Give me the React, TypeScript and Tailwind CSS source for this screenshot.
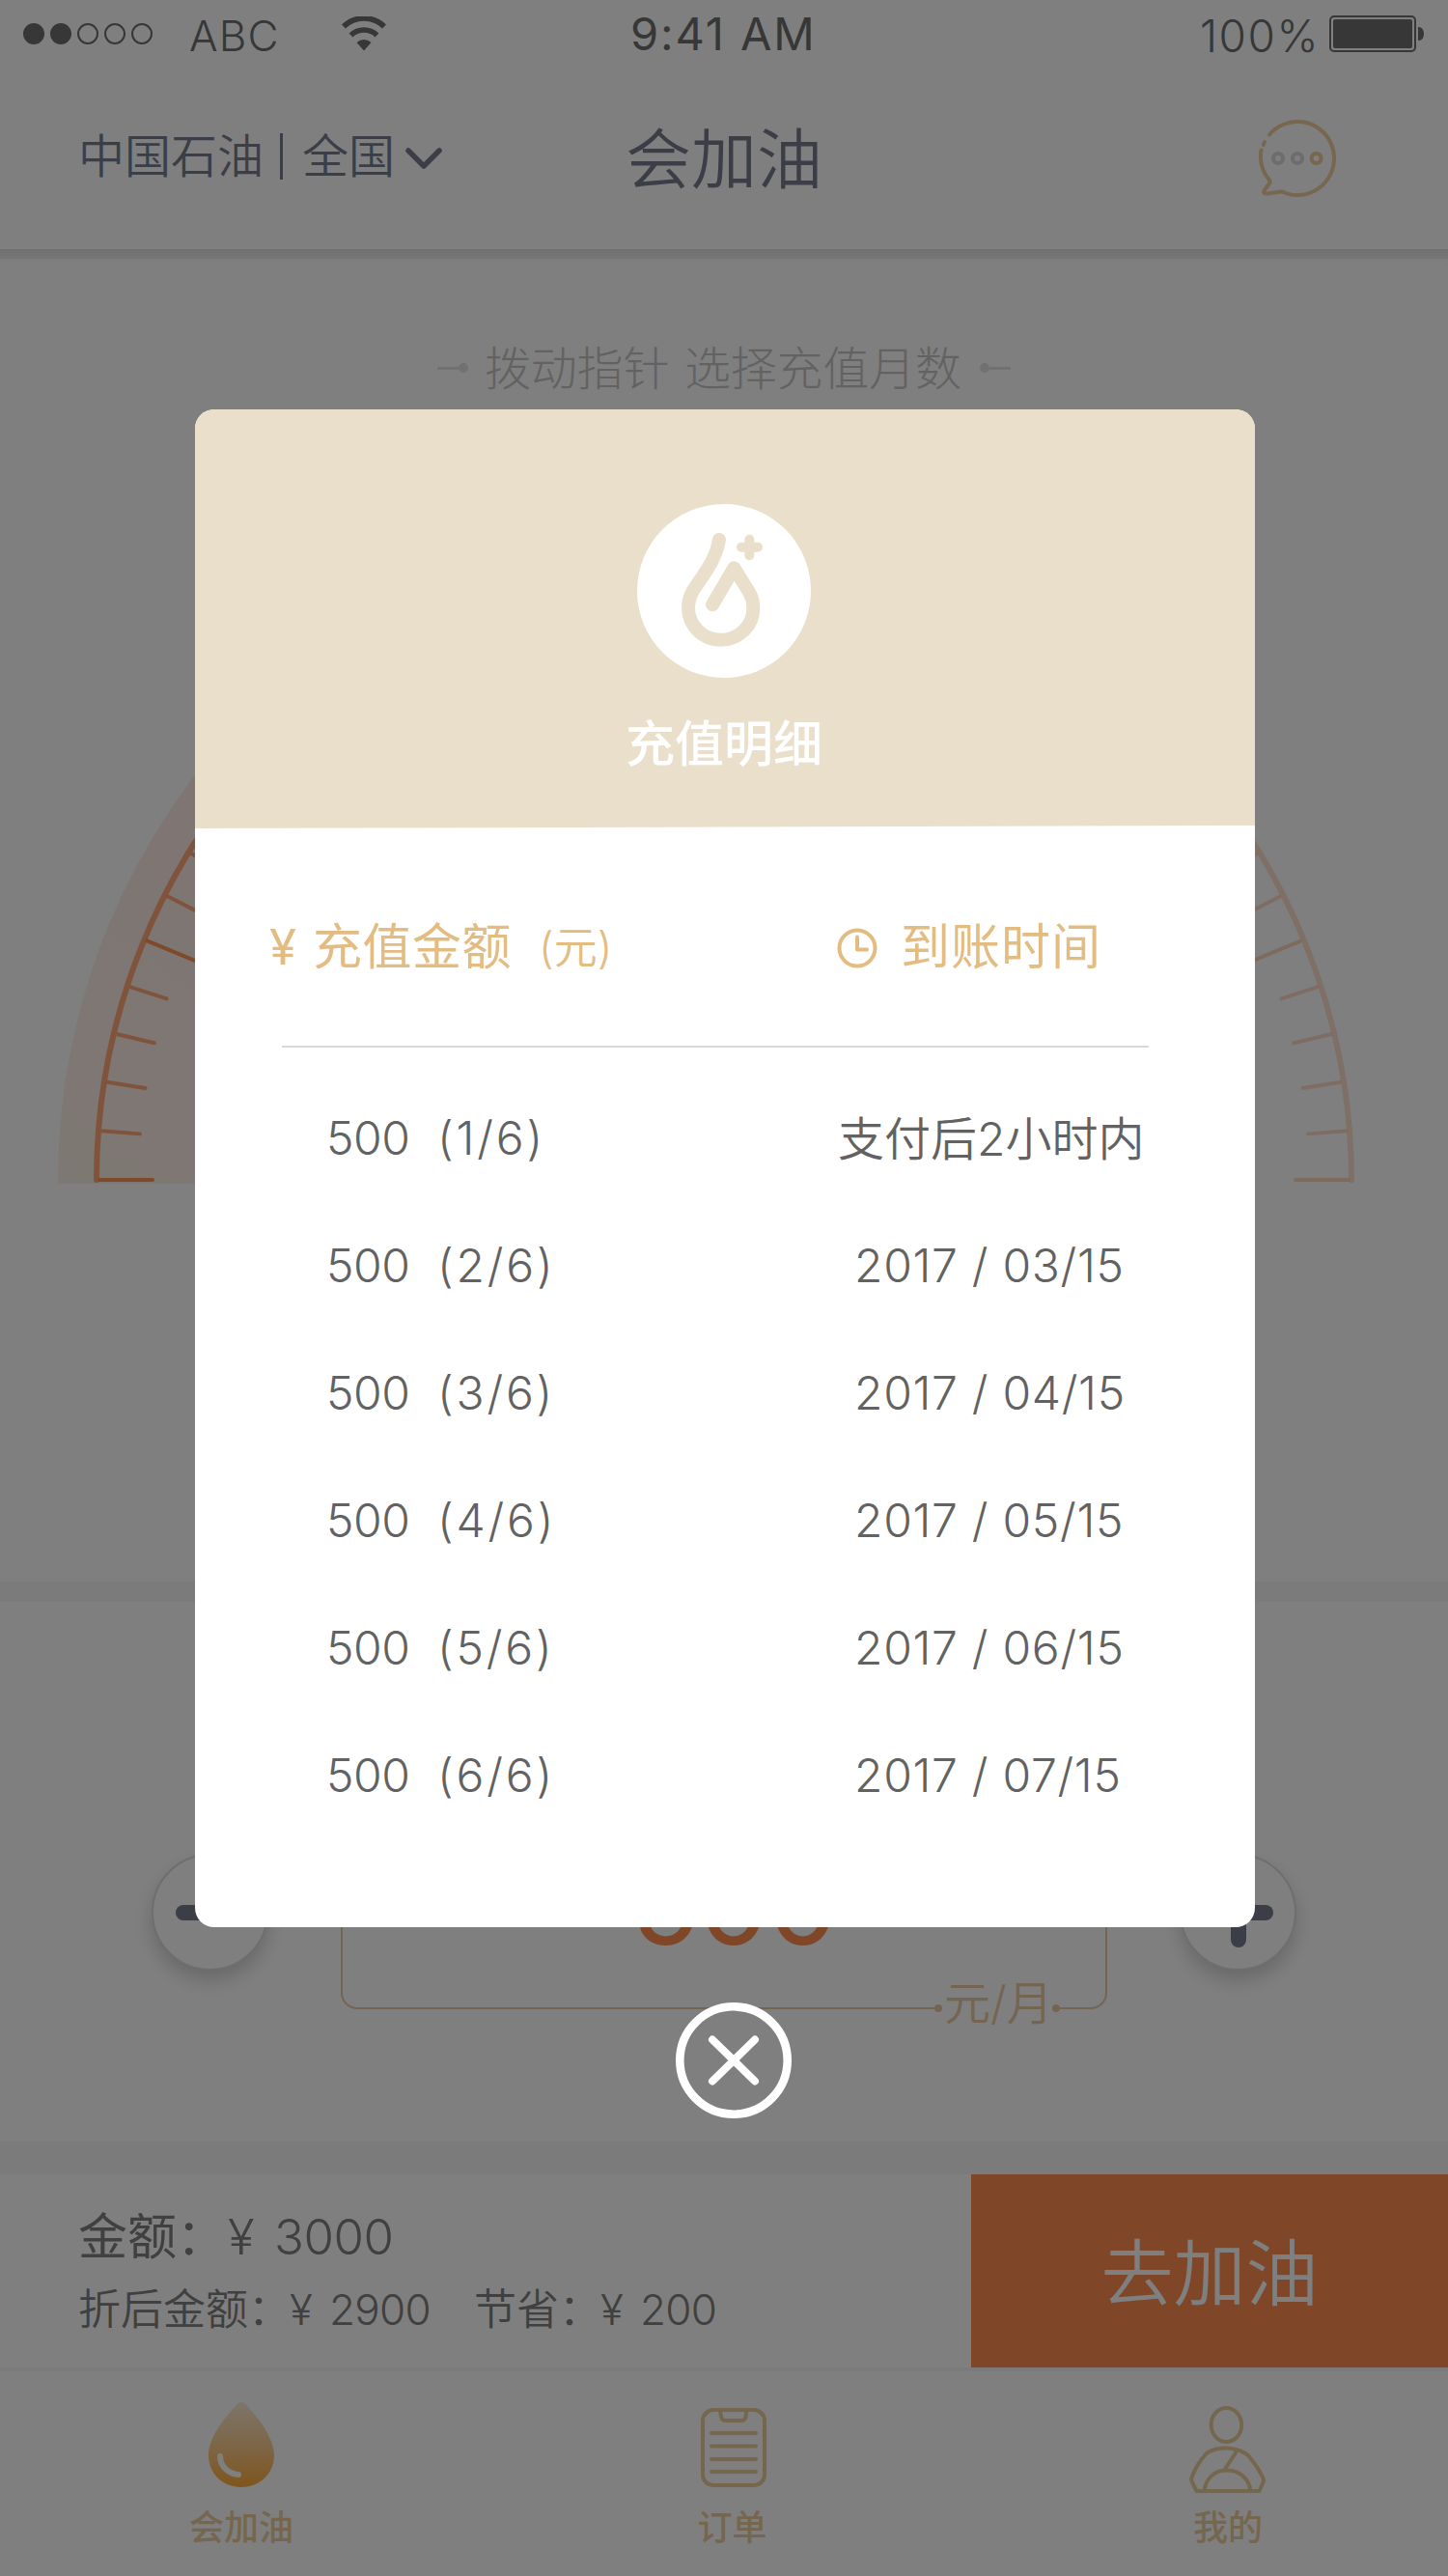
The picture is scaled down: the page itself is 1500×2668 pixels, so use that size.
import React from "react";

const FONT = "font-['Inter','Noto_Sans_CJK_SC',sans-serif]";

const schedule = [
  { part: "1/6", time: "支付后2小时内" },
  { part: "2/6", time: "2017 / 03/15" },
  { part: "3/6", time: "2017 / 04/15" },
  { part: "4/6", time: "2017 / 05/15" },
  { part: "5/6", time: "2017 / 06/15" },
  { part: "6/6", time: "2017 / 07/15" },
];

function StatusBar() {
  return (
    <div className="flex h-[70px] items-center text-[#6e6e6e]">
      <div className="ml-6 flex w-[172px] gap-[6px]">
        {[1, 1, 0, 0, 0].map((on, i) => (
          <span
            key={i}
            className={`h-[22px] w-[22px] rounded-full border-2 border-[#6e6e6e] ${on ? "bg-[#6e6e6e]" : ""}`}
          />
        ))}
      </div>
      <span className="mt-[3px] w-[158px] text-[44px] leading-[50px] font-[330] tracking-[1.2px]">ABC</span>
      <svg className="h-[36px] w-[46px]" viewBox="0 0 46 36" fill="none" stroke="currentColor">
        <path d="M2 10.5 A30 30 0 0 1 44 10.5" strokeWidth="5.6" />
        <path d="M9.5 19.5 A19.5 19.5 0 0 1 36.500 19.5" strokeWidth="5.6" />
        <path d="M23 35.500 L15.500 27 A11 11 0 0 1 30.500 27 Z" fill="currentColor" stroke="none" />
      </svg>
      <span className="ml-[253px] w-[199px] text-[47px] leading-[50px] tracking-[1.900px] whitespace-nowrap">9:41 AM</span>
      <span className="mt-[3px] ml-[391px] w-[134px] text-[46px] leading-[50px] font-light tracking-[1.5px] whitespace-nowrap">100%</span>
      <svg className="h-[38px] w-[98px]" viewBox="0 0 98 38" fill="currentColor">
        <rect x="1" y="1" width="88" height="36" rx="4" fill="none" stroke="currentColor" strokeWidth="2" />
        <rect x="4" y="4" width="82" height="30" rx="2" />
        <path d="M92 12 h1 q5 1 5 7 t-5 7 h-1z" />
      </svg>
    </div>
  );
}

function ChatIcon() {
  return (
    <svg className="h-[84px] w-[84px]" viewBox="1302 122 84 84" fill="none" stroke="#ecce9c" strokeWidth="4" strokeLinecap="round" strokeLinejoin="round">
      <path d="M1315 139.500 A38 38 0 1 1 1344 202 Q1336 202 1331 199.500 Q1328 198 1323 199 L1313 200.500 Q1308 201 1309.500 197.500 L1315 190 Q1316.500 188 1314.500 186 A38 38 0 0 1 1306.500 155.500" />
      <path d="M1310 147 L1308.800 150" />
      <g strokeWidth="4.200">
        <circle cx="1324" cy="164" r="5" stroke="#dadada" />
        <circle cx="1344" cy="164" r="5" stroke="#dadada" />
        <circle cx="1363.600" cy="164" r="5" />
      </g>
    </svg>
  );
}

function TopBar() {
  return (
    <div className="flex h-[188px] items-start text-[#777d8e]">
      <div className="mt-[60px] ml-[81px] flex w-[567px] items-center text-[48px] leading-[64px] whitespace-nowrap">
        <span className="font-[350]">中国石油</span>
        <span className="ml-[17px] h-[48px] w-[3px] bg-[#777d8e]" />
        <span className="ml-[20px] font-[350]">全国</span>
        <svg className="mt-[4px] ml-[10px] h-[24px] w-[40px]" viewBox="0 0 40 24" fill="none" stroke="currentColor" strokeWidth="5.500" strokeLinecap="round" strokeLinejoin="round">
          <path d="M4 4 L20 20 L36 4" />
        </svg>
      </div>
      <h1 className="mt-[55px] w-[654px] text-[68px] leading-[80px] font-[350]">会加油</h1>
      <div className="mt-[52px]">
        <ChatIcon />
      </div>
    </div>
  );
}

function Hint() {
  return (
    <div className="flex h-[48px] w-[594px] items-center text-[48px] leading-[48px] font-light whitespace-nowrap text-[#c4c4c4]">
      <span className="h-[3px] w-[22px] bg-[#e2e2e2]" />
      <span className="mr-[17px] h-[10px] w-[10px] rounded-full bg-[#e2e2e2]" />
      <span className="mt-[2px] w-[207px] tracking-[-0.2px]">拨动指针</span>
      <span className="mt-[2px] w-[306px] tracking-[-0.2px]">选择充值月数</span>
      <span className="h-[10px] w-[10px] rounded-full bg-[#e2e2e2]" />
      <span className="h-[3px] w-[22px] bg-[#e2e2e2]" />
    </div>
  );
}

const CX = 690;
const CY = 690;
const ticks = Array.from({ length: 41 }, (_, i) => {
  const a = (i * 4.5 * Math.PI) / 180;
  const long = i % 5 === 0;
  const inner = long ? 592 : 607;
  return {
    long,
    left: i <= 20,
    x1: CX - 647 * Math.cos(a),
    y1: CY - 647 * Math.sin(a),
    x2: CX - inner * Math.cos(a),
    y2: CY - inner * Math.sin(a),
  };
});

function Gauge() {
  return (
    <svg className="h-[700px] w-[1380px]" viewBox="0 0 1380 700" fill="none" strokeLinecap="round">
      <defs>
        <linearGradient id="dial" x1="0" y1="1" x2="0.700" y2="0">
          <stop offset="0" stopColor="#fdf1e8" />
          <stop offset="0.450" stopColor="#feebe5" />
          <stop offset="1" stopColor="#fddccb" />
        </linearGradient>
      </defs>
      <path d="M0 694 V690 A690 690 0 0 1 690 0 V694 Z" fill="url(#dial)" />
      <path d="M40 690 A650 650 0 0 1 690 40" stroke="#ffa678" strokeWidth="6" />
      <path d="M690 40 A650 650 0 0 1 1340 690" stroke="#fee0cf" strokeWidth="6" />
      {ticks.map((t, i) => (
        <line
          key={i}
          x1={t.x1}
          y1={t.y1}
          x2={t.x2}
          y2={t.y2}
          strokeWidth="4"
          stroke={t.left ? (t.long ? "#ff9452" : "#ffa678") : t.long ? "#fed6bd" : "#fedac8"}
        />
      ))}
    </svg>
  );
}

function Stepper() {
  const knob =
    "relative flex h-[121px] w-[121px] items-center justify-center rounded-full border-2 border-[#dcdcdc] bg-white shadow-[0_10px_20px_rgba(0,0,0,0.18)]";
  return (
    <div className="flex items-start pt-[261px] pl-[157px]">
      <button className={knob}>
        <span className="h-[16px] w-[72px] rounded-full bg-[#777d8e]" />
      </button>
      <div className="relative mt-[-80px] ml-[75px] flex h-[241px] w-[794px] justify-center rounded-[17px] border-2 border-[#e8cba6]">
        <span className="mt-[59px] mr-[-20px] text-[118px] leading-[140px] tracking-[-2.5px] text-[#ff8e4f]">500</span>
        <div className="absolute right-[47px] bottom-[-26px] flex h-[50px] items-center bg-white text-[#e8cba6]">
          <span className="h-[8px] w-[8px] rounded-full bg-[#e8cba6]" />
          <span className="mt-[-11px] w-[114px] pl-[2px] text-[48px] leading-[50px] font-[350] whitespace-nowrap">元/月</span>
          <span className="h-[8px] w-[8px] rounded-full bg-[#e8cba6]" />
        </div>
      </div>
      <button className={`${knob} ml-[75px]`}>
        <span className="h-[16px] w-[72px] rounded-full bg-[#777d8e]" />
        <span className="absolute h-[72px] w-[16px] rounded-full bg-[#777d8e]" />
      </button>
    </div>
  );
}

function PayBar() {
  return (
    <div className="flex h-[200px]">
      <div className="w-[1006px] pt-[35px] pl-[81px] whitespace-nowrap text-[#808080]">
        <div className="flex h-[60px] text-[51px] leading-[60px] font-[380]">
          <span className="w-[155px]">金额：</span>
          <span className="w-[48px] font-[350]">¥</span>
          <span className="font-[340] tracking-[-0.500px]">3000</span>
        </div>
        <div className="mt-[15px] flex h-[60px] text-[44px] leading-[60px] font-[350]">
          <span className="w-[219px]">折后金额：</span>
          <span className="w-[41px] font-[340]">¥</span>
          <span className="w-[150px] font-[330] tracking-[-0.7px]">2900</span>
          <span className="w-[131px]">节省：</span>
          <span className="w-[41px] font-[340]">¥</span>
          <span className="font-[330] tracking-[-0.7px]">200</span>
        </div>
      </div>
      <button className="flex h-[200px] w-[494px] items-center justify-center bg-[#ff8e4f] text-[75px] leading-[90px] font-[350] text-white">
        <span className="mt-[6px]">去加油</span>
      </button>
    </div>
  );
}

function DropIcon() {
  return (
    <svg className="h-[88px] w-[68px]" viewBox="0 0 68 88">
      <defs>
        <linearGradient id="drop" x1="0" y1="0" x2="0" y2="1">
          <stop offset="0" stopColor="#fbead6" />
          <stop offset="0.550" stopColor="#fbca8a" />
          <stop offset="1" stopColor="#ffab3a" />
        </linearGradient>
      </defs>
      <path d="M34 0 C37 0 39 3 41 5 C52 17 68 37 68 55 C68 74 53 88 34 88 C15 88 0 74 0 55 C0 37 16 17 27 5 C29 3 31 0 34 0 Z" fill="url(#drop)" />
      <path d="M12 56 C12 66 20 74 31 75" fill="none" stroke="#fff" strokeWidth="6" strokeLinecap="round" />
    </svg>
  );
}

function OrderIcon() {
  return (
    <svg className="h-[82px] w-[68px]" viewBox="0 0 68 82" fill="none" stroke="#eacd9c" strokeWidth="4" strokeLinecap="round">
      <rect x="2" y="2" width="64" height="78" rx="11" />
      <path d="M20 3 L21 9 Q22 13 25 13 H42 Q46 13 46.500 9 L47.500 3" />
      <path d="M11 26 H57 M11 39.500 H57 M11 53 H57 M11 66 H57" />
    </svg>
  );
}

function MineIcon() {
  return (
    <svg className="h-[92px] w-[80px]" viewBox="1231 2491 80 92" fill="none" stroke="#eacd9c" strokeWidth="4" strokeLinejoin="round">
      <ellipse cx="1270.400" cy="2511.500" rx="15.800" ry="17.500" />
      <path d="M1239.500 2580 L1235 2571 Q1233.500 2568 1235 2564.500 Q1240 2552 1248.500 2542.500 Q1250 2540.500 1252 2539.500 Q1260 2535.500 1269 2535.500 Q1281 2535.500 1291 2541.500 Q1293 2543 1295 2545.500 Q1303 2555 1308 2565.500 Q1309.500 2568.500 1308.500 2571 L1304.500 2580 Z" />
      <path d="M1247.500 2580 C1249 2567 1258 2558.500 1270.500 2558.500 C1284 2558.500 1294 2567 1295.500 2580" />
      <path d="M1281 2539 L1268.500 2558" />
    </svg>
  );
}

function TabBar() {
  const label = "text-[36px] leading-[40px] font-medium text-[#eacd9c]";
  return (
    <div className="flex h-[212px] pl-[130px]">
      <div className="flex w-[240px] flex-col items-center pt-[32px]">
        <DropIcon />
        <span className={`${label} mt-[22px]`}>会加油</span>
      </div>
      <div className="ml-[270px] flex w-[240px] flex-col items-center pt-[38px]">
        <OrderIcon />
        <span className={`${label} mt-[22px] mr-[3px]`}>订单</span>
      </div>
      <div className="ml-[271px] flex w-[240px] flex-col items-center pt-[35px]">
        <MineIcon />
        <span className={`${label} mt-[15px] ml-[2px]`}>我的</span>
      </div>
    </div>
  );
}

function DetailModal() {
  return (
    <div className="absolute top-[424px] left-[202px] h-[1572px] w-[1098px] overflow-hidden rounded-[20px] bg-white">
      <div className="flex h-[434px] flex-col items-center bg-[#e9dfcb] pt-[98px] pr-[2px] [clip-path:polygon(0_0,100%_0,100%_431px,0_434px)]">
        <svg className="h-[180px] w-[180px]" viewBox="180 126 540 540" fill="none" stroke="#e9dfcb" strokeLinecap="round" strokeLinejoin="round">
          <circle cx="450" cy="396" r="270" fill="#fff" stroke="none" />
          <path d="M435 237 C425 300 388 342 354 395 C344 412 339 428 339 449 C340 505 385 548 440 548 C497 548 541 504 541 450 C541 430 535 411 527 398 L481 325 L414 439" strokeWidth="42" />
          <path d="M504 260.500 H555 M529 236 V286" strokeWidth="30" />
        </svg>
        <h2 className="mt-[39px] text-[51px] leading-[60px] font-medium text-white">充值明细</h2>
      </div>
      <div className="mt-[91px] flex h-[64px] items-center pl-[77px] text-[51px] leading-[64px] whitespace-nowrap text-[#e3bc81]">
        <span className="w-[45px]">¥</span>
        <span className="w-[234px] tracking-[0.5px]">充值金额</span>
        <span className="mt-[2px] w-[309px] text-[45px] font-[350]">(元)</span>
        <svg className="mt-[1px] h-[42px] w-[42px]" viewBox="0 0 42 42" fill="none" stroke="currentColor" strokeWidth="4" strokeLinecap="round" strokeLinejoin="round">
          <circle cx="21" cy="21" r="18.500" />
          <path d="M21 9.500 V22.500 H31" />
        </svg>
        <span className="ml-[24px] tracking-[1px]">到账时间</span>
      </div>
      <div className="mt-[70px] ml-[90px] h-[2px] w-[898px] bg-[#d9d9d9]" />
      <ul className="mt-[28px] text-[48px] leading-[132px] font-[330] whitespace-nowrap text-[#626262]">
        {schedule.map((row) => (
          <li key={row.part} className="flex h-[132px] items-center pl-[136px]">
            <span className="w-[115px] tracking-[-0.400px]">500</span>
            <span className="w-[415px] tracking-[2.800px]">({row.part})</span>
            <span className={row.part === "1/6" ? "pt-[1px] font-[350]" : "pl-[17px] tracking-[0.7px]"}>{row.time}</span>
          </li>
        ))}
      </ul>
    </div>
  );
}

function CloseButton() {
  return (
    <button className="absolute top-[2074px] left-[700px] h-[120px] w-[120px]">
      <svg className="h-full w-full" viewBox="0 0 120 120" fill="none" stroke="#fff" strokeLinecap="round">
        <circle cx="60" cy="60" r="55.700" strokeWidth="8.600" />
        <path d="M38 38.500 L82 81.500 M82 38.500 L38 81.500" strokeWidth="8" />
      </svg>
    </button>
  );
}

export default function App() {
  return (
    <div className={`${FONT} relative h-[2668px] w-[1500px] overflow-hidden bg-white`}>
      <header className="h-[258px]">
        <StatusBar />
        <TopBar />
      </header>
      <div className="h-[10px] bg-linear-to-b from-[#e2e2e2] to-[#ececec]" />
      <div className="h-[16px] bg-linear-to-b from-[#fbfbfb] to-white" />
      <section className="flex h-[1354px] flex-col items-center pt-[73px]">
        <Hint />
        <div className="mt-[127px]">
          <Gauge />
        </div>
      </section>
      <div className="h-[21px] bg-[#f6f6f6]" />
      <section className="h-[559px]">
        <Stepper />
      </section>
      <div className="h-[34px] bg-[#f6f6f6]" />
      <PayBar />
      <div className="h-[4px] bg-[#f6f6f6]" />
      <TabBar />
      <div className="absolute inset-0 bg-black/50" />
      <DetailModal />
      <CloseButton />
    </div>
  );
}
